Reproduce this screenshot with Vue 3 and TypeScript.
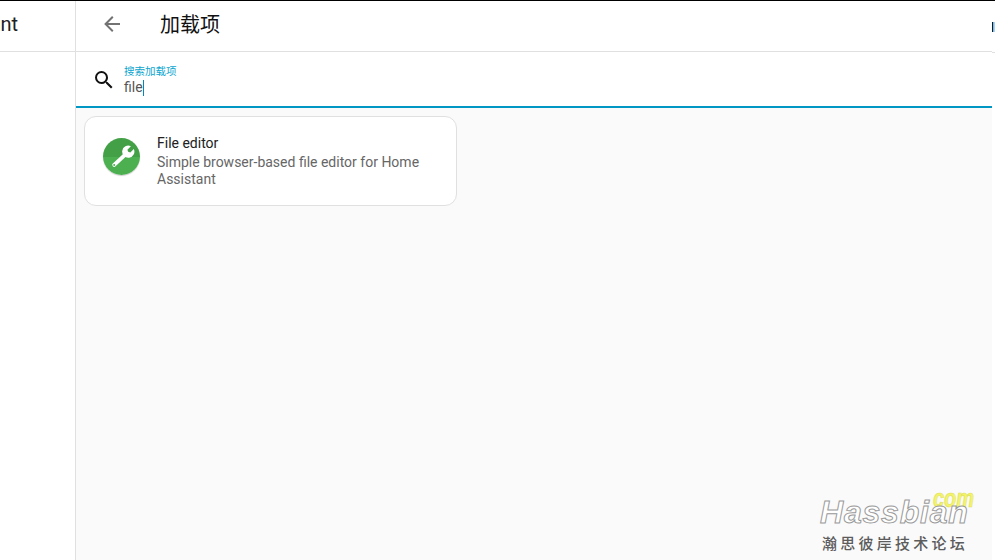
<script setup lang="ts">
const title = '加载项'
const label = '搜索加载项'
const query = 'file'
</script>

<template>
  <div class="page">
    <aside class="side">
      <div class="side-head"><span class="side-title">Home Assistant</span></div>
    </aside>
    <main class="main">
      <header class="bar">
        <button class="back" aria-label="back">
          <svg width="24" height="24" viewBox="0 0 24 24"><path fill="#737373" d="M20 11v2H8l5.500 5.500-1.420 1.420L4.160 12l7.920-7.920L13.500 5.500 8 11h12z"/></svg>
        </button>
        <h1 class="title">{{ title }}</h1>
      </header>
      <div class="search">
        <svg class="lens" width="24" height="24" viewBox="0 0 24 24"><path fill="#111" d="M9.500 3A6.500 6.500 0 0 1 16 9.500c0 1.610-.59 3.090-1.560 4.230l.27.27h.79l5 5-1.500 1.500-5-5v-.79l-.27-.27A6.516 6.516 0 0 1 9.500 16 6.500 6.500 0 0 1 3 9.500 6.500 6.500 0 0 1 9.500 3m0 2C7 5 5 7 5 9.500S7 14 9.500 14 14 12 14 9.500 12 5 9.500 5z"/></svg>
        <div class="field">
          <span class="label">{{ label }}</span>
          <span class="value">{{ query }}<i class="caret"></i></span>
        </div>
      </div>
      <section class="content">
        <article class="card">
          <div class="avatar">
            <svg width="26" height="26" viewBox="0 0 24 24">
              <path d="M4.800 19.300L15.500 9.300" stroke="#fff" stroke-width="3.600" stroke-linecap="round"/>
              <path fill="#fff" d="M20.200 2L17 5.200L17.700 7.200L19.700 7.900L22.900 4.700A5.640 5.640 0 1 1 20.200 2Z"/>
              <circle cx="4.800" cy="19.300" r="0.900" fill="#4caf50"/>
            </svg>
          </div>
          <div class="text">
            <div class="name">File editor</div>
            <div class="desc">Simple browser-based file editor for Home Assistant</div>
          </div>
        </article>
      </section>
    </main>
    <span class="edge"></span>
    <span class="edge-line"></span>
    <div class="mark">
      <span class="com">com</span>
      <span class="brand">Hassbian</span>
      <span class="cn">瀚思彼岸技术论坛</span>
    </div>
  </div>
</template>

<style>
html, body { margin: 0; padding: 0; background: #fff; }
</style>

<style scoped>
.page {
  position: relative;
  display: flex;
  width: 995px;
  height: 560px;
  box-sizing: border-box;
  border-top: 1px solid #000;
  overflow: hidden;
  font-family: Roboto, "Noto Sans CJK SC", sans-serif;
  background: #fff;
}
.side {
  flex: none;
  width: 75px;
  border-right: 1px solid #e0e0e0;
  overflow: hidden;
}
.side-head {
  height: 45px;
  padding-bottom: 5px;
  border-bottom: 1px solid #e0e0e0;
  display: flex;
  align-items: center;
  justify-content: flex-end;
  white-space: nowrap;
}
.side-title { font-size: 20px; color: #212121; margin-right: 57px; }
.main {
  flex: 1;
  display: flex;
  flex-direction: column;
  min-width: 0;
  margin-right: 3px;
  background: #fafafa;
}
.bar {
  flex: none;
  height: 45px;
  display: flex;
  align-items: center;
  background: #fff;
  border-bottom: 1px solid #e0e0e0;
  padding-left: 24px;
  padding-bottom: 5px;
}
.back { width: 24px; height: 24px; padding: 0; border: 0; background: none; display: flex; }
.title { margin: 0 0 0 36px; font-size: 20px; font-weight: 400; color: #111; }
.edge {
  position: absolute;
  left: 992px;
  top: 21px;
  width: 3px;
  height: 10px;
  background: linear-gradient(90deg, #1a1a1a 33%, #5ab0ee 33%, #bfe0fa);
}
.edge-line { position: absolute; left: 992px; top: 51px; width: 3px; height: 1px; background: #e0e0e0; }
.search {
  flex: none;
  height: 54px;
  display: flex;
  align-items: center;
  background: #fff;
  border-bottom: 2px solid #0097c4;
  padding-left: 16px;
}
.lens { flex: none; margin-top: 1px; }
.field { display: flex; flex-direction: column; margin-left: 8px; padding-top: 4px; }
.label { font-size: 10.500px; line-height: 12px; color: #0aa5cf; margin-bottom: 1px; }
.value { font-size: 14px; line-height: 17px; color: #555; display: flex; align-items: center; }
.caret { width: 1px; height: 16px; background: #0288b8; }
.content { padding: 8px; flex: 1; }
.card {
  box-sizing: border-box;
  width: 373px;
  height: 90px;
  background: #fff;
  border: 1px solid #e0e0e0;
  border-radius: 12px;
  display: flex;
  padding: 16px 16px 0 18px;
}
.avatar {
  flex: none;
  width: 37px;
  height: 37px;
  margin-top: 5px;
  border-radius: 50%;
  background: linear-gradient(#43a047 50%, #4caf50 50%);
  box-shadow: 0 1px 1px rgba(0, 0, 0, 0.2);
  display: flex;
  align-items: center;
  justify-content: center;
}
.text { margin-left: 17px; }
.name { font-size: 14px; line-height: 20px; color: #212121; margin-bottom: 1px; }
.desc { font-size: 14px; line-height: 17px; color: #666; }
.mark { position: absolute; left: 820px; top: 487px; width: 156px; height: 66px; }
.brand {
  position: absolute;
  left: 0;
  top: 6px;
  font: italic 700 32px "Liberation Sans", sans-serif;
  color: #fff;
  -webkit-text-stroke: 1px #999;
  letter-spacing: 0.800px;
}
.com {
  position: absolute;
  right: 2px;
  top: 0;
  font: italic 700 20px/20px "Liberation Sans", sans-serif;
  color: #f4f46a;
  -webkit-text-stroke: 0.500px #e0e060;
  transform: scaleY(1.250);
}
.cn {
  position: absolute;
  left: 2px;
  top: 44px;
  font-size: 15px;
  font-weight: 500;
  letter-spacing: 3.250px;
  color: #5c5c5c;
  white-space: nowrap;
}
</style>
